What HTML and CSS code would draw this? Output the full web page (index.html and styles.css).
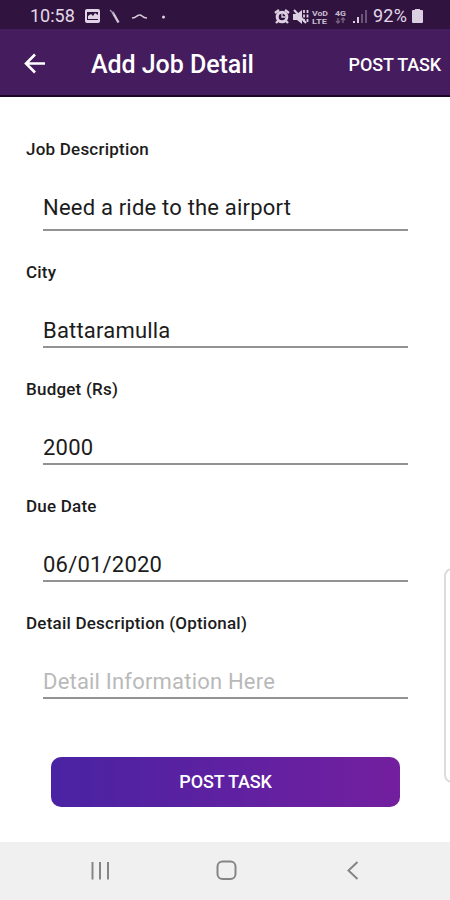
FILE: index.html
```html
<!DOCTYPE html>
<html lang="en">
<head>
    <meta charset="UTF-8">
    <meta name="viewport" content="width=device-width, initial-scale=1.0">
    <title>Add Job Detail</title>
    <link rel="stylesheet" href="styles.css">
</head>
<body>
    <div class="status-bar">
        <span class="clock">10:58</span>
        <svg width="90" height="20" viewBox="0 0 90 20">
            <path fill="#e0d4e6" fill-rule="evenodd" d="M3 3h11a2 2 0 0 1 2 2v10a2 2 0 0 1-2 2H3a2 2 0 0 1-2-2V5a2 2 0 0 1 2-2zm0 3v8h11V6zm1 7v-3l3-2 2 2 2-3 3 2v4z"/>
            <path fill="none" stroke="#d5c9dc" stroke-width="2.400" d="M28.500 6l6 10.500"/>
            <path fill="none" stroke="#a596b0" stroke-width="1.200" d="M26 4l4 4"/>
            <path fill="none" stroke="#d5c9dc" stroke-width="1.600" d="M48 12q3 0 5-2 3-2 5 0 2 2 5 2"/>
            <circle fill="#e0d4e6" cx="79.500" cy="11" r="1.500"/>
        </svg>
        <svg class="status-right" width="96" height="20" viewBox="0 0 96 20">
            <g fill="none" stroke="#dccfe2">
                <circle cx="9" cy="11" r="4.800" stroke-width="3"/>
                <path stroke-width="2.400" d="M2 7l4-3M12 4l4 3M5 15l-2 2M13 15l2 2"/>
                <path stroke-width="1.300" d="M9 8v3h3"/>
                <path stroke-width="2" d="M21 4l12 13"/>
                <path stroke-width="1.800" stroke-dasharray="3 1.500" d="M31 4v13M34.500 4v13"/>
            </g>
            <path fill="#dccfe2" d="M20 8h4l5-4v14l-5-4h-4z"/>
            <g fill="#c9bcd1" class="tiny">
                <text x="39" y="10" textLength="16" lengthAdjust="spacingAndGlyphs">VoD</text>
                <text x="39" y="18" textLength="15" lengthAdjust="spacingAndGlyphs">LTE</text>
                <text x="62" y="10" textLength="11" lengthAdjust="spacingAndGlyphs">4G</text>
            </g>
            <path fill="none" stroke="#75627f" stroke-width="1.400" d="M65 12v5M63 15l2 2 2-2M70 17v-5M68 14l2-2 2 2"/>
            <path fill="#dccfe2" d="M80 15h2v2h-2zM84 11h2v6h-2z"/>
            <path fill="#6a5278" d="M88 8h2v9h-2zM92 4h2v13h-2z"/>
        </svg>
        <span class="percent">92%</span>
        <svg width="11" height="16" viewBox="0 0 11 16">
            <path fill="#dccfe2" d="M3 1h5v1h2q1 0 1 1v11q0 1-1 1H1q-1 0-1-1V3q0-1 1-1h2z"/>
        </svg>
    </div>

    <header class="app-bar">
        <svg width="22" height="22" viewBox="0 0 22 22">
            <path fill="none" stroke="#fff" stroke-width="2.600" d="M21 10.500H2.500M11 1.500l-9 9 9 9"/>
        </svg>
        <h1>Add Job Detail</h1>
        <button type="button" class="bar-action">POST TASK</button>
    </header>

    <form class="job-form">
        <div class="form-group form-group-tall">
            <label for="job">Job Description</label>
            <input type="text" id="job" value="Need a ride to the airport">
        </div>
        <div class="form-group">
            <label for="city">City</label>
            <input type="text" id="city" value="Battaramulla">
        </div>
        <div class="form-group">
            <label for="budget">Budget (Rs)</label>
            <input type="text" id="budget" value="2000">
        </div>
        <div class="form-group">
            <label for="due">Due Date</label>
            <input type="text" id="due" value="06/01/2020">
        </div>
        <div class="form-group">
            <label for="detail">Detail Description (Optional)</label>
            <input type="text" id="detail" placeholder="Detail Information Here">
        </div>
        <button type="button" class="submit">POST TASK</button>
    </form>

    <div class="edge-handle"></div>

    <nav class="nav-bar">
        <svg width="22" height="22" viewBox="0 0 22 22">
            <path fill="none" stroke="#858585" stroke-width="2" d="M2.500 2v17.500M10 2v17.500M18 2v17.500"/>
        </svg>
        <svg width="22" height="22" viewBox="0 0 22 22">
            <rect fill="none" stroke="#858585" stroke-width="2" x="1.500" y="1.500" width="18" height="17.500" rx="5"/>
        </svg>
        <svg width="22" height="22" viewBox="0 0 22 22">
            <path fill="none" stroke="#858585" stroke-width="2" d="M16.500 2L7.500 10.500l9 8.500"/>
        </svg>
    </nav>
</body>
</html>
```

FILE: styles.css
```css
* {
    box-sizing: border-box;
}

body {
    font-family: Roboto, sans-serif;
    background-color: #fff;
    margin: 0;
    height: 900px;
    display: flex;
    flex-direction: column;
    position: relative;
    overflow: hidden;
}

button {
    font-family: inherit;
    border: none;
    padding: 0;
    color: #fff;
    cursor: pointer;
}

.status-bar {
    background: #30143f;
    height: 29px;
    display: flex;
    align-items: center;
    padding: 2px 27px 0 30px;
    color: #e3d9e8;
    font-size: 18px;
}

.clock {
    width: 54px;
}

.status-right {
    margin-left: auto;
    margin-right: 4px;
}

.tiny {
    font-size: 8px;
    font-weight: bold;
}

.percent {
    width: 39px;
    white-space: nowrap;
    letter-spacing: 0.2px;
}

.app-bar {
    background: #451c5e;
    height: 68px;
    border-bottom: 2px solid #1c0529;
    display: flex;
    align-items: center;
    padding: 4px 9px 0 24px;
    color: #fff;
}

h1 {
    margin: 1px 0 0 45px;
    font-size: 25px;
    font-weight: 500;
    letter-spacing: -0.05px;
}

.bar-action {
    background: none;
    margin-left: auto;
    font-size: 18px;
    font-weight: 500;
    letter-spacing: -0.15px;
}

.job-form {
    flex: 1;
    padding: 42px 42px 0 26px;
    display: flex;
    flex-direction: column;
}

.form-group {
    display: flex;
    flex-direction: column;
    gap: 32px;
    margin-bottom: 31px;
}

label {
    font-size: 17px;
    font-weight: 500;
    line-height: 20px;
    letter-spacing: 0.22px;
    color: #1c1c1c;
}

input {
    font-family: inherit;
    font-size: 22px;
    letter-spacing: 0.2px;
    height: 34px;
    margin-left: 17px;
    padding: 0;
    border: none;
    border-bottom: 2px solid #929292;
    background: none;
    color: #1c1c1c;
    outline: none;
}

.form-group-tall input {
    height: 40px;
    padding-bottom: 6px;
}

input::placeholder {
    color: #b9b9b9;
}

.submit {
    background: linear-gradient(to right, #4923a3, #731f9f);
    border-radius: 10px;
    height: 50px;
    margin: 27px 8px 0 25px;
    padding-bottom: 1px;
    font-size: 18px;
    font-weight: 500;
    letter-spacing: -0.15px;
}

/* edge panel handle, partly off screen */
.edge-handle {
    position: absolute;
    top: 568px;
    right: -10px;
    width: 16px;
    height: 215px;
    border: 2px solid #dcdcdc;
    border-radius: 8px;
    background: #fff;
}

.nav-bar {
    background: #f0f0f0;
    height: 58px;
    display: flex;
    justify-content: space-between;
    align-items: center;
    padding: 0 87px 0 90px;
}
```
